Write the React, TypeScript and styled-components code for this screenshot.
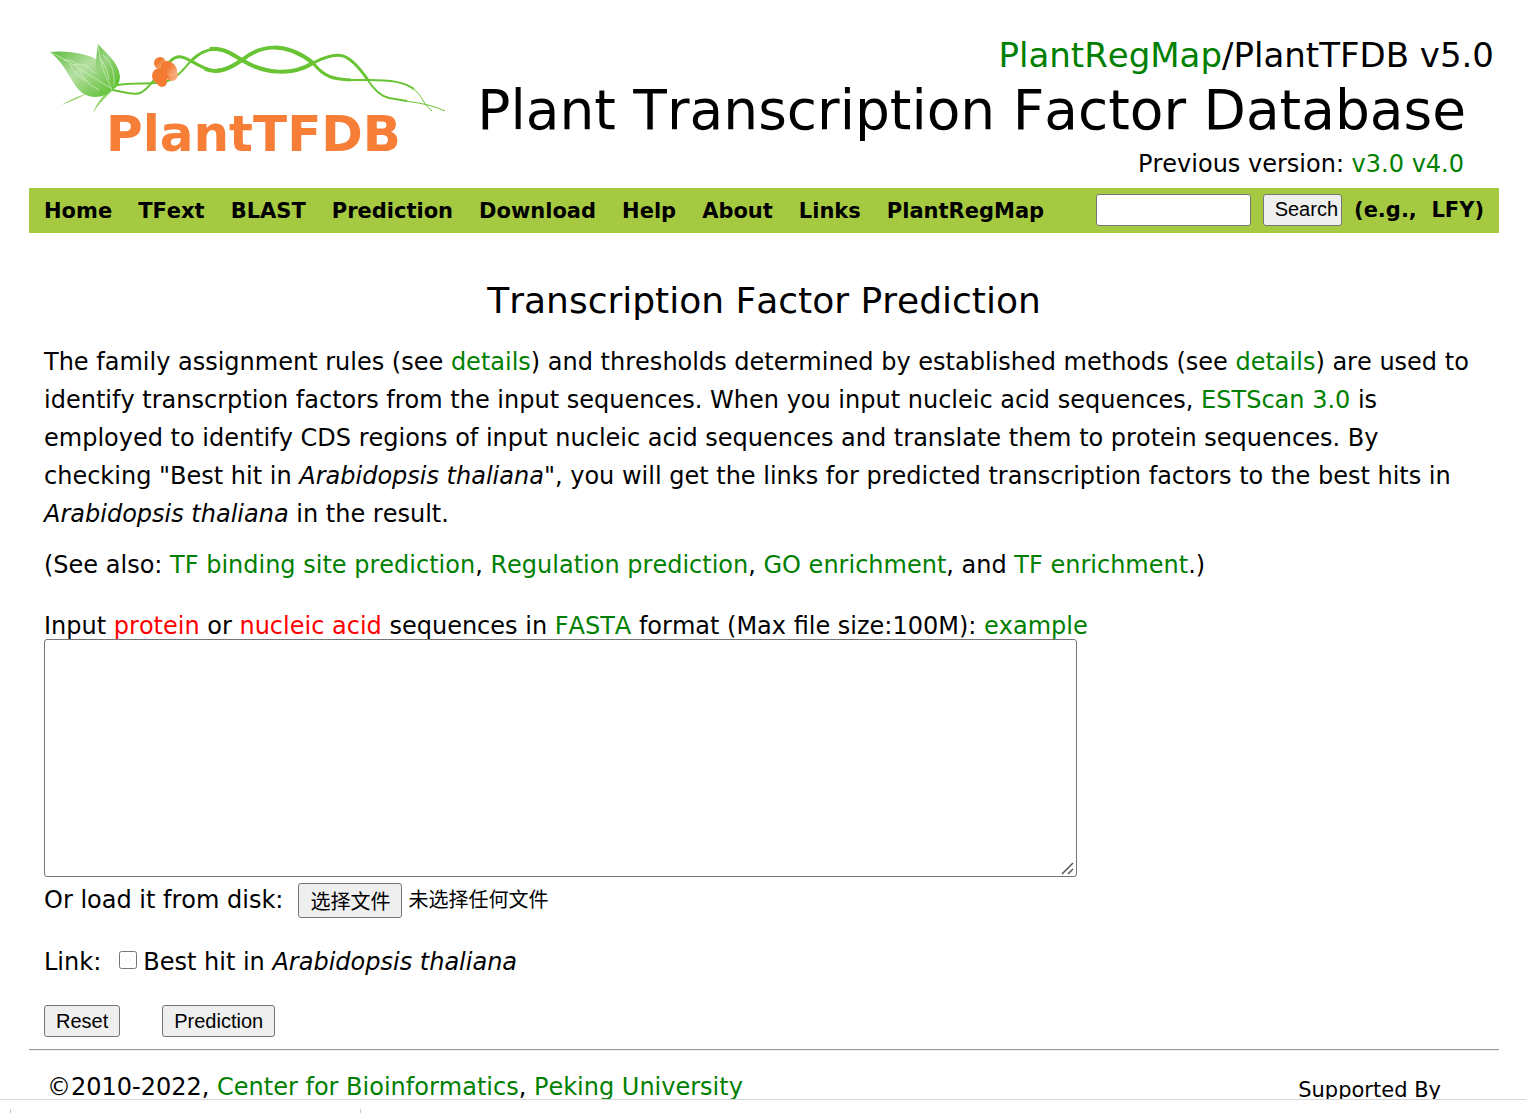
import React, { useRef, useState } from "react";
import styled, { createGlobalStyle } from "styled-components";

const GlobalStyle = createGlobalStyle`
  * { box-sizing: border-box; }
  body {
    margin: 0;
    background: #fff;
    color: #000;
    font-family: Verdana, "DejaVu Sans", "Noto Sans CJK SC", sans-serif;
    font-size: 24px;
    line-height: 38px;
    font-kerning: none;
  }
`;

const Shell = styled.div`
  display: flex;
  flex-direction: column;
  height: 100vh;
`;

const Page = styled.div`
  flex: 1;
  min-height: 0;
  overflow-y: auto;
  scrollbar-width: none;
  padding: 0 27px 0 29px;
`;

const Link = styled.a`
  color: #008000;
  text-decoration: none;
  &:hover { text-decoration: underline; }
`;

const Header = styled.header`
  display: flex;
  justify-content: space-between;
  align-items: flex-start;
  padding: 33px 5px 5px 15px;
`;

const Logo = styled.svg`
  display: block;
  flex: none;
  width: 410px;
  height: 130px;
`;

const Titles = styled.div`
  text-align: right;
  white-space: nowrap;
`;

const Release = styled.div`
  font-size: 34px;
  line-height: 44px;
`;

const SiteTitle = styled.h1`
  margin: 0;
  padding-right: 28px;
  font-size: 55px;
  font-weight: 400;
  line-height: 66px;
`;

const Previous = styled.div`
  padding: 2px 30px 0 0;
`;

const NavBar = styled.nav`
  display: flex;
  align-items: center;
  justify-content: space-between;
  height: 45px;
  padding: 0 15px;
  background: #a6c942;
  font-size: 21px;
  font-weight: 700;
  white-space: nowrap;
`;

const NavList = styled.ul`
  display: flex;
  gap: 26px;
  margin: 0;
  padding: 0;
  list-style: none;
`;

const NavLink = styled.a`
  color: #000;
  text-decoration: none;
`;

const SearchForm = styled.form`
  display: flex;
  align-items: center;
  gap: 12px;
  padding-bottom: 2px;
`;

const SearchBox = styled.input`
  width: 155px;
  height: 32px;
  padding: 2px;
  border: 1px solid #767676;
  border-radius: 3px;
  background: #fff;
  font: 20px "Liberation Sans", Arial, sans-serif;
`;

const Button = styled.button<{ $tight?: boolean }>`
  height: 32px;
  padding: ${(p) => (p.$tight ? "0 3px 0 11px" : "0 11px")};
  border: 1px solid #767676;
  border-radius: 3px;
  background: #efefef;
  color: #000;
  font: 20px "Liberation Sans", Arial, sans-serif;
`;

const Main = styled.main`
  padding: 46px 15px 12px;
`;

const Heading = styled.h2`
  margin: 0 0 20px;
  font-size: 36px;
  font-weight: 400;
  line-height: 44px;
  text-align: center;
`;

const Paragraph = styled.p`
  margin: 0 0 13px;
`;

const InputLabel = styled.label`
  display: block;
  padding-top: 16px;
  line-height: 26px;
`;

const Red = styled.span`
  color: #f00;
`;

const Sequences = styled.textarea`
  display: block;
  width: 1033px;
  max-width: 100%;
  height: 238px;
  padding: 3px;
  border: 1px solid #767676;
  border-radius: 3px;
  font: 20px "Liberation Mono", monospace;

  &::-webkit-scrollbar {
    width: 16px;
  }
  &::-webkit-resizer {
    background: url("data:image/svg+xml,%3Csvg xmlns='http://www.w3.org/2000/svg' width='16' height='16'%3E%3Cpath d='M2 14L13 3M8 14L13 9' stroke='%23555' stroke-width='1.5'/%3E%3C/svg%3E") no-repeat right bottom;
  }
`;

const Row = styled.div<{ $top: number; $gap?: number }>`
  display: flex;
  align-items: center;
  gap: ${(p) => p.$gap ?? 0}px;
  margin-top: ${(p) => p.$top}px;
`;

const FileButton = styled(Button)`
  height: 35px;
  margin: 0 6px 0 15px;
  font-family: "Liberation Sans", "Noto Sans CJK SC", sans-serif;
`;

const FileName = styled.span`
  font: 20px/35px "Liberation Sans", "Noto Sans CJK SC", sans-serif;
`;

const Tick = styled.input`
  width: 18px;
  height: 18px;
  margin: 0 6px 4px 18px;
`;

const Footer = styled.footer`
  display: flex;
  justify-content: space-between;
  padding: 18px 58px 40px 18px;
  border-top: 1px solid #9a9a9a;
  box-shadow: inset 0 1px #eee;
`;

const Supported = styled.div`
  padding-top: 3px;
  font-size: 21px;
`;

const StatusBar = styled.div`
  display: flex;
  flex: none;
  align-items: flex-end;
  height: 14px;
  padding-left: 10px;
  border-top: 1px solid #d6d6d6;
  background: #fff;
`;

const StatusCell = styled.span`
  width: 350px;
  height: 4px;
  border-left: 1px solid #ccc;
  &:last-child { width: 1px; }
`;

const navItems = ["Home", "TFext", "BLAST", "Prediction", "Download", "Help", "About", "Links", "PlantRegMap"];

function PlantLogo() {
  return (
    <Logo viewBox="44 33 410 130" role="img" aria-label="PlantTFDB">
      <defs>
        <linearGradient id="leaf" x1="0" y1="0" x2="1" y2="1">
          <stop offset="0" stopColor="#5cbb3c" />
          <stop offset="0.45" stopColor="#b5dfa2" />
          <stop offset="1" stopColor="#5abf2e" />
        </linearGradient>
        <linearGradient id="leafTop" x1="0" y1="0" x2="0.7" y2="1">
          <stop offset="0" stopColor="#6cc24e" />
          <stop offset="0.4" stopColor="#9ad583" />
          <stop offset="1" stopColor="#60c033" />
        </linearGradient>
        <linearGradient id="petal" x1="0" y1="0" x2="1" y2="0">
          <stop offset="0.4" stopColor="#f47b32" />
          <stop offset="1" stopColor="#f9b38a" />
        </linearGradient>
        <linearGradient id="petalPale" x1="0" y1="0" x2="1" y2="1">
          <stop offset="0.4" stopColor="#f47b32" />
          <stop offset="1" stopColor="#fbd0b3" />
        </linearGradient>
      </defs>
      <g fill="#69c433">
        <path d="M112 89C98 90 82 93 61 105Q78 99 88 93ZM112 89C103 95 97 102 93 113Q99 103 112 91Z" opacity=".75" />
        <path d="M50 52C68 50 88 54 98 60L112 89C106 98 92 99 84 94C72 87 68 66 50 52Z" fill="url(#leaf)" />
        <path d="M98 44C107 54 118 62 120 76Q120 86 112 90Q98 80 96 66Q96 55 98 44Z" fill="url(#leafTop)" />
      </g>
      <g fill="none" stroke="#d7f0c9" strokeWidth="0.7">
        <path d="M51 52C71 63 91 76 112 89M98 45C100 61 104 75 112 89M64 60Q72 59 79 66M73 65Q84 61 95 73M70 64Q73 73 86 81M79 69Q84 83 99 90M99 58Q107 65 109 80M103 55Q116 66 114 87" />
      </g>
      <g fill="none" stroke="#69c433">
        <path strokeWidth="2" d="M114 86C122 83 140 84 155 83C176 83 182 70 191 61" />
        <path strokeWidth="2" d="M112 90C122 91 132 96 140 93C150 89 153 78 165 68" />
        <path strokeWidth="3" d="M165 68C174 54 180 55 191 61C205 69 213 74 228 68" />
        <path strokeWidth="4" d="M205 69C218 74 229 69 242 60C260 45 285 41 313 63" />
        <path strokeWidth="3" d="M191 61C206 46 221 45 242 60" />
        <path strokeWidth="4" d="M210 49C222 47 231 54 242 60C264 74 292 76 313 63" />
        <path strokeWidth="3" d="M313 63C340 49 349 53 368 80" />
        <path strokeWidth="3" d="M313 63C325 78 334 79 351 80" />
        <path strokeWidth="2" d="M350 80H368C392 80 404 82 414 89" />
        <path strokeWidth="1" d="M412 88C422 94 424 106 432 111" />
        <path strokeWidth="2" d="M367 79Q378 96 389 98L407 101" />
        <path strokeWidth="1" d="M405 101Q431 104 445 111" />
      </g>
      <circle cx="160" cy="63" r="6" fill="url(#petalPale)" />
      <circle cx="172" cy="75" r="6" fill="url(#petalPale)" />
      <ellipse cx="169" cy="69" rx="9" ry="7" fill="url(#petal)" transform="rotate(40 169 69)" />
      <ellipse cx="160" cy="76" rx="8" ry="8" fill="#f47b32" />
      <circle cx="162" cy="82" r="5" fill="#f47b32" />
      <text x="106" y="151" fill="#f67e36" fontFamily="DejaVu Sans" fontWeight="700" fontSize="50">PlantTFDB</text>
    </Logo>
  );
}

export default function App() {
  const fileRef = useRef<HTMLInputElement>(null);
  const [fileName, setFileName] = useState("未选择任何文件");

  return (
    <Shell>
      <GlobalStyle />
      <Page>
        <Header>
          <PlantLogo />
          <Titles>
            <Release><Link href="#regmap">PlantRegMap</Link>/PlantTFDB v5.0</Release>
            <SiteTitle>Plant Transcription Factor Database</SiteTitle>
            <Previous>Previous version: <Link href="#v3">v3.0</Link> <Link href="#v4">v4.0</Link></Previous>
          </Titles>
        </Header>
        <NavBar>
          <NavList>
            {navItems.map((item) => (
              <li key={item}><NavLink href={"#" + item.toLowerCase()}>{item}</NavLink></li>
            ))}
          </NavList>
          <SearchForm onSubmit={(e) => e.preventDefault()}>
            <SearchBox type="text" aria-label="Search" />
            <Button $tight type="submit">Search</Button>
            <span>(e.g.,&nbsp; LFY)</span>
          </SearchForm>
        </NavBar>
        <Main>
          <Heading>Transcription Factor Prediction</Heading>
          <Paragraph>
            The family assignment rules (see <Link href="#rules">details</Link>) and thresholds determined by established methods (see <Link href="#thresholds">details</Link>) are used to identify transcrption factors from the input sequences. When you input nucleic acid sequences, <Link href="#estscan">ESTScan 3.0</Link> is employed to identify CDS regions of input nucleic acid sequences and translate them to protein sequences. By checking "Best hit in <i>Arabidopsis thaliana</i>", you will get the links for predicted transcription factors to the best hits in <i>Arabidopsis thaliana</i> in the result.
          </Paragraph>
          <Paragraph>
            (See also: <Link href="#binding">TF binding site prediction</Link>, <Link href="#regulation">Regulation prediction</Link>, <Link href="#go">GO enrichment</Link>, and <Link href="#tf">TF enrichment</Link>.)
          </Paragraph>
          <form onSubmit={(e) => e.preventDefault()}>
            <InputLabel htmlFor="sequences">
              Input <Red>protein</Red> or <Red>nucleic acid</Red> sequences in <Link href="#fasta">FASTA</Link> format (Max file size:100M): <Link href="#example">example</Link>
            </InputLabel>
            <Sequences id="sequences" />
            <Row $top={4}>
              <label htmlFor="file">Or load it from disk:</label>
              <input
                id="file"
                ref={fileRef}
                type="file"
                hidden
                onChange={(e) => setFileName(e.target.files?.[0]?.name ?? "未选择任何文件")}
              />
              <FileButton type="button" onClick={() => fileRef.current?.click()}>选择文件</FileButton>
              <FileName>{fileName}</FileName>
            </Row>
            <Row $top={24}>
              <span>Link:</span>
              <Tick id="best-hit" type="checkbox" />
              <label htmlFor="best-hit">Best hit in <i>Arabidopsis thaliana</i></label>
            </Row>
            <Row $top={24} $gap={42}>
              <Button type="reset">Reset</Button>
              <Button type="submit">Prediction</Button>
            </Row>
          </form>
        </Main>
        <Footer>
          <div>©2010-2022, <Link href="#cbi">Center for Bioinformatics</Link>, <Link href="#pku">Peking University</Link></div>
          <Supported>Supported By</Supported>
        </Footer>
      </Page>
      <StatusBar><StatusCell /><StatusCell /></StatusBar>
    </Shell>
  );
}
